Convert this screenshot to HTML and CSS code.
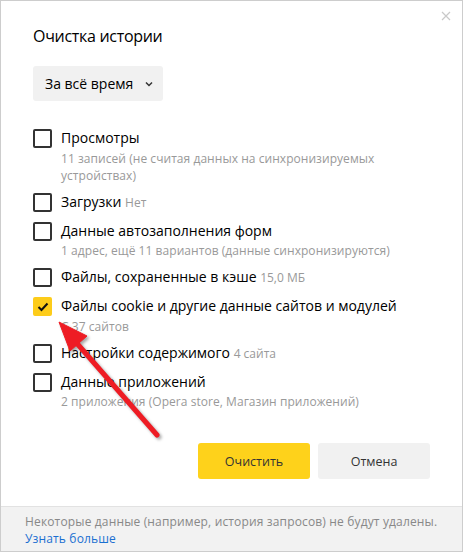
FILE: index.html
```html
<!DOCTYPE html>
<html lang="ru">
<head>
<meta charset="utf-8">
<title>Очистка истории</title>
<link rel="stylesheet" href="styles.css">
</head>
<body>
<div class="dialog">
  <svg class="close" width="10" height="10" viewBox="0 0 10 10"><path d="M1 1L9 9M9 1L1 9" stroke="#c9c9c9" stroke-width="1.2" fill="none"/></svg>
  <div class="main">
    <div class="title">Очистка истории</div>
    <div class="select">
      <span>За всё время</span>
      <svg class="chev" width="8" height="6" viewBox="0 0 8 6"><path d="M1 1.5L4 4.5L7 1.5" stroke="#333" stroke-width="1.5" fill="none"/></svg>
    </div>
    <div class="list">
      <div class="row">
        <div class="box"></div>
        <div class="text">
          <div class="label">Просмотры</div>
          <div class="sub">11 записей (не считая данных на синхронизируемых устройствах)</div>
        </div>
      </div>
      <div class="row">
        <div class="box"></div>
        <div class="text">
          <div class="label">Загрузки <span class="note">Нет</span></div>
        </div>
      </div>
      <div class="row">
        <div class="box"></div>
        <div class="text">
          <div class="label">Данные автозаполнения форм</div>
          <div class="sub">1 адрес, ещё 11 вариантов (данные синхронизируются)</div>
        </div>
      </div>
      <div class="row">
        <div class="box"></div>
        <div class="text">
          <div class="label">Файлы, сохраненные в кэше <span class="note">15,0 МБ</span></div>
        </div>
      </div>
      <div class="row">
        <div class="box checked">
          <svg width="12" height="10" viewBox="0 0 12 10"><path d="M1.5 5L4.5 8L10.5 1.5" stroke="#111" stroke-width="2" fill="none"/></svg>
        </div>
        <div class="text">
          <div class="label">Файлы cookie и другие данные сайтов и модулей</div>
          <div class="sub">С 37 сайтов</div>
        </div>
      </div>
      <div class="row">
        <div class="box"></div>
        <div class="text">
          <div class="label">Настройки содержимого <span class="note">4 сайта</span></div>
        </div>
      </div>
      <div class="row">
        <div class="box"></div>
        <div class="text">
          <div class="label">Данные приложений</div>
          <div class="sub">2 приложения (Opera store, Магазин приложений)</div>
        </div>
      </div>
    </div>
    <div class="actions">
      <button class="btn primary">Очистить</button>
      <button class="btn">Отмена</button>
    </div>
  </div>
  <div class="footer">
    <div>Некоторые данные (например, история запросов) не будут удалены.</div>
    <a class="link" href="#">Узнать больше</a>
  </div>
  <svg class="arrow" width="464" height="552" viewBox="0 0 464 552">
    <g fill="#ee1c24" stroke="#ee1c24">
      <line x1="157" y1="435" x2="74" y2="340" stroke-width="5" stroke-linecap="round"/>
      <polygon points="59,322 87,336 70,351" stroke-width="1" stroke-linejoin="round"/>
    </g>
  </svg>
</div>
</body>
</html>
```
FILE: styles.css
```css
* { box-sizing: border-box; }
html, body { margin: 0; padding: 0; background: #fff; }
.dialog {
  position: relative;
  width: 463px;
  height: 552px;
  border: 1px solid #cdcdcd;
  display: flex;
  flex-direction: column;
  font-family: "Open Sans", "Noto Sans", sans-serif;
  color: #000;
  background: #fff;
}
.close { position: absolute; top: 10px; right: 11px; }
.main { flex: 1; padding: 23px 32px 0 32px; }
.title { font-size: 16px; line-height: 24px; letter-spacing: -0.3px; }
.select {
  margin-top: 18px;
  width: 130px;
  height: 35px;
  background: #f1f1f1;
  border-radius: 3px;
  display: flex;
  align-items: center;
  gap: 12px;
  padding-left: 12px;
  font-size: 14px;
}
.list { margin-top: 28px; display: flex; flex-direction: column; gap: 9px; }
.row { display: flex; align-items: flex-start; gap: 9px; }
.box {
  width: 19px; height: 19px; flex: none;
  border: 2px solid #333;
  border-radius: 2px;
  display: flex; align-items: center; justify-content: center;
}
.box.checked { background: #fdcc1a; border-color: #fdcc1a; }
.text { flex: 1; }
.label { font-size: 14px; line-height: 20px; margin-top: -1px; }
.note { font-size: 12px; color: #999; }
.sub { font-size: 12px; line-height: 17px; color: #999; margin-top: 1.5px; letter-spacing: 0.05px; }
.actions { margin-top: 33px; display: flex; justify-content: flex-end; gap: 8px; }
.btn {
  width: 112px; height: 36px;
  border: none; border-radius: 3px;
  background: #f1f1f1;
  font-family: inherit;
  font-size: 12.5px;
  color: #333;
}
.btn.primary { background: #fed21b; }
.footer {
  height: 45px;
  border-top: 1px solid #e2e2e2;
  background: #f2f2f2;
  padding: 6px 24px 0 24px;
  font-size: 12px;
  line-height: 17px;
  color: #888;
  letter-spacing: 0.15px;
}
.link { color: #1a6fd1; text-decoration: none; }
.arrow { position: absolute; left: -1px; top: -1px; pointer-events: none; filter: drop-shadow(2px 2px 1.5px rgba(0,0,0,0.35)); }
```
